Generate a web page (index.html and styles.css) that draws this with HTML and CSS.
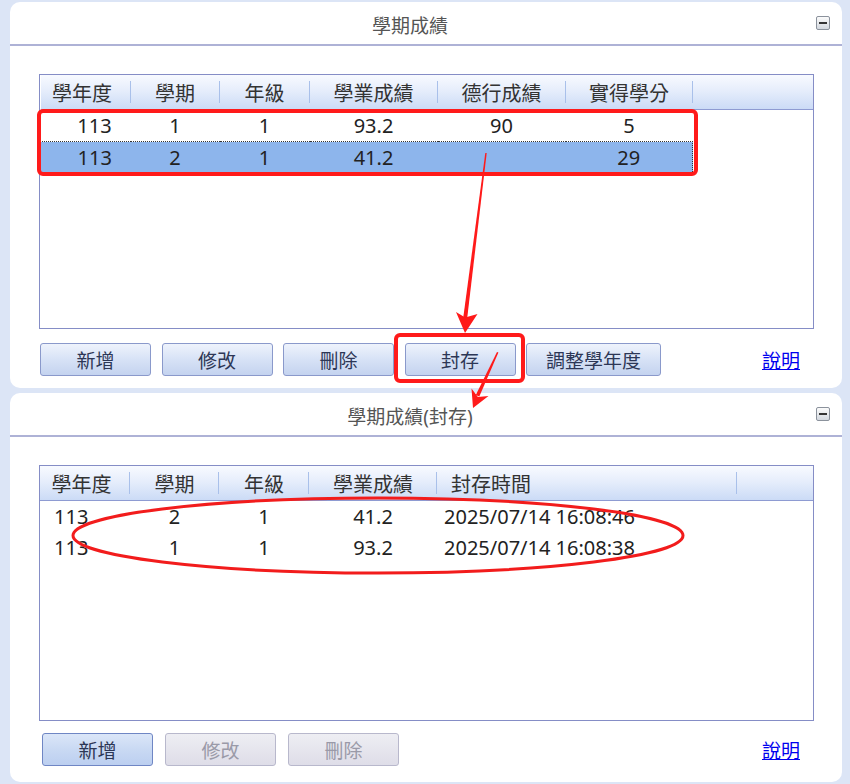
FILE: index.html
```html
<!DOCTYPE html>
<html lang="zh-Hant">
<head>
    <meta charset="UTF-8">
    <title>學期成績</title>
    <link rel="stylesheet" href="styles.css">
</head>
<body>

    <div class="page">
        <section class="panel panel-main">
            <div class="panel-head">
                <span class="panel-title">學期成績</span>
                <span class="collapse"></span>
            </div>
            <div class="panel-body">
                <div class="grid">
                    <table>
                        <colgroup>
                            <col style="width:90px"><col style="width:89px"><col style="width:90px">
                            <col style="width:128px"><col style="width:128px"><col style="width:127px"><col>
                        </colgroup>
                        <thead>
                            <tr>
                                <th class="first">學年度</th>
                                <th>學期</th>
                                <th>年級</th>
                                <th>學業成績</th>
                                <th>德行成績</th>
                                <th>實得學分</th>
                                <th class="fill"></th>
                            </tr>
                        </thead>
                        <tbody>
                            <tr>
                                <td class="year">113</td>
                                <td>1</td>
                                <td>1</td>
                                <td>93.2</td>
                                <td>90</td>
                                <td>5</td>
                                <td class="fill"></td>
                            </tr>
                            <tr class="selected">
                                <td class="year">113</td>
                                <td>2</td>
                                <td>1</td>
                                <td>41.2</td>
                                <td></td>
                                <td class="last">29</td>
                                <td class="fill"></td>
                            </tr>
                        </tbody>
                    </table>
                </div>
                <div class="actions">
                    <button class="btn">新增</button>
                    <button class="btn">修改</button>
                    <button class="btn">刪除</button>
                    <button class="btn">封存</button>
                    <button class="btn btn-wide">調整學年度</button>
                    <a class="help" href="#">說明</a>
                </div>
            </div>
        </section>

        <section class="panel panel-archive">
            <div class="panel-head">
                <span class="panel-title">學期成績(封存)</span>
                <span class="collapse"></span>
            </div>
            <div class="panel-body">
                <div class="grid grid-archive">
                    <table>
                        <colgroup>
                            <col style="width:90px"><col style="width:89px"><col style="width:90px">
                            <col style="width:128px"><col style="width:300px"><col>
                        </colgroup>
                        <thead>
                            <tr>
                                <th class="first">學年度</th>
                                <th>學期</th>
                                <th>年級</th>
                                <th>學業成績</th>
                                <th class="left">封存時間</th>
                                <th class="fill"></th>
                            </tr>
                        </thead>
                        <tbody>
                            <tr>
                                <td class="left">113</td>
                                <td>2</td>
                                <td>1</td>
                                <td>41.2</td>
                                <td class="stamp">2025/07/14 16:08:46</td>
                                <td class="fill"></td>
                            </tr>
                            <tr>
                                <td class="left">113</td>
                                <td>1</td>
                                <td>1</td>
                                <td>93.2</td>
                                <td class="stamp">2025/07/14 16:08:38</td>
                                <td class="fill"></td>
                            </tr>
                        </tbody>
                    </table>
                </div>
                <div class="actions actions-archive">
                    <button class="btn btn-active">新增</button>
                    <button class="btn" disabled>修改</button>
                    <button class="btn" disabled>刪除</button>
                    <a class="help" href="#">說明</a>
                </div>
            </div>
        </section>
    </div>

    <!-- red annotation marks drawn over the screenshot -->
    <svg class="marks" width="850" height="784" viewBox="0 0 850 784">
        <rect x="39" y="111" width="657" height="63" rx="4" fill="none" stroke="#ff1a1a" stroke-width="4"/>
        <rect x="396" y="335" width="127" height="46" rx="4" fill="none" stroke="#ff1a1a" stroke-width="4"/>
        <polygon points="485.3,153 486.7,153 467.2,318 463.2,318" fill="#ff1a1a"/>
        <polygon points="465,333 456,312 465.2,317.5 477.5,314" fill="#ff1a1a"/>
        <polygon points="497,352 498.4,352.6 479.3,396.5 475.8,395" fill="#ff1a1a"/>
        <polygon points="473,408 471.5,388.5 477.9,397 488.5,396" fill="#ff1a1a"/>
        <ellipse cx="378" cy="535.5" rx="305" ry="37.5" fill="none" stroke="#f21c1c" stroke-width="3"/>
    </svg>

</body>
</html>
```

FILE: styles.css
```css
body {
    margin: 0;
    width: 850px;
    height: 784px;
    overflow: hidden;
    position: relative;
    background-color: #dce5f6;
    font-family: "Noto Sans", "Noto Sans CJK TC", sans-serif;
    font-size: 20px;
    color: #222;
}

.page {
    padding: 2px 8px 0 10px;
}

.panel {
    background: white;
    border-radius: 10px;
}

.panel-main {
    height: 386px;
}

.panel-archive {
    height: 389px;
    margin-top: 5px;
}

.panel-head {
    height: 42px;
    border-bottom: 2px solid #aeb2d6;
    display: flex;
    align-items: center;
}

.panel-title {
    flex: 1;
    padding-top: 3px;
    text-align: center;
    color: #555;
    font-size: 19px;
}

.collapse {
    width: 12px;
    height: 12px;
    margin: 0 12px 0 6px;
    border: 1px solid #8b929c;
    border-radius: 2px;
    background: linear-gradient(#fbfbfb, #d3d8df);
    display: flex;
    align-items: center;
    justify-content: center;
}

.collapse::before {
    content: "";
    width: 8px;
    height: 2px;
    background: #333;
}

.panel-body {
    padding: 28px 28px 0 29px;
}

.grid {
    height: 255px;
    box-sizing: border-box;
    border: 1px solid #858dc6;
    background: white;
}

.grid-archive {
    height: 256px;
}

table {
    width: 100%;
    border-collapse: collapse;
    table-layout: fixed;
}

th {
    height: 34px;
    padding: 0;
    position: relative;
    font-weight: normal;
    color: #333;
    background: linear-gradient(#f8faff, #e4ecfb 50%, #cbdbf6);
    border-bottom: 1px solid #8e9bd2;
}

th::after {
    content: "";
    position: absolute;
    right: 0;
    top: 6px;
    bottom: 6px;
    width: 1px;
    background: #a9c0ea;
}

th.fill::after {
    display: none;
}

th.first {
    padding-right: 7px;
}

td {
    height: 31px;
    padding: 0;
    text-align: center;
    white-space: nowrap;
}

td.year {
    padding-left: 18px;
}

th.left, td.left {
    text-align: left;
    padding-left: 14px;
}

td.stamp {
    text-align: left;
    padding-left: 7px;
}

.selected td:not(.fill) {
    background: #8db5ec;
    border-top: 1px dotted #333;
    border-bottom: 1px dotted #333;
}

.selected td:first-child {
    border-left: 1px dotted #333;
}

.selected td.last {
    border-right: 1px dotted #333;
}

.actions {
    display: flex;
    align-items: center;
    margin-top: 14px;
    padding-left: 1px;
}

.actions-archive {
    margin-top: 12px;
    padding-left: 3px;
}

.btn {
    width: 111px;
    height: 33px;
    margin-right: 10.5px;
    padding: 0;
    border: 1px solid #8a99cb;
    border-radius: 3px;
    background: linear-gradient(#eef3fc, #d7e2f6 50%, #c4d3ef);
    font-family: inherit;
    font-size: 19px;
    color: #2d3756;
}

.btn-wide {
    width: 135px;
}

.actions-archive .btn {
    margin-right: 12px;
}

.btn-active {
    border-color: #6f86c4;
    background: linear-gradient(#dbe6f8, #c9d9f3 50%, #bccff0);
}

.btn:disabled {
    border-color: #b8b8cc;
    background: linear-gradient(#eeeef3, #dedde8);
    color: #9a9aa8;
}

.help {
    margin-left: auto;
    margin-right: 14px;
    font-size: 19px;
    color: #0000ee;
}

.marks {
    position: absolute;
    top: 0;
    left: 0;
    pointer-events: none;
}
```
